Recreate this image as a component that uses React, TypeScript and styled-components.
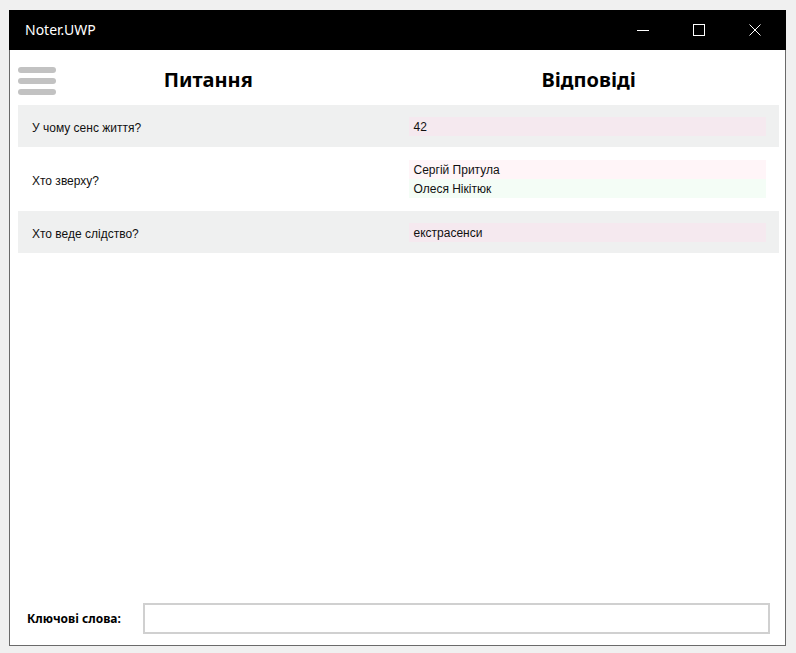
import styled, { createGlobalStyle } from "styled-components";

const GlobalStyle = createGlobalStyle`
	body {
		margin: 0;
		background: #f0f0f0;
		font-family: "Noto Sans", "Open Sans", sans-serif;
	}
`;

type Answer = { text: string; tone: "pink" | "rose" | "mint" };
type Note = { question: string; answers: Answer[] };

const notes: Note[] = [
	{ question: "У чому сенс життя?", answers: [{ text: "42", tone: "pink" }] },
	{
		question: "Хто зверху?",
		answers: [
			{ text: "Сергій Притула", tone: "rose" },
			{ text: "Олеся Нікітюк", tone: "mint" },
		],
	},
	{ question: "Хто веде слідство?", answers: [{ text: "екстрасенси", tone: "pink" }] },
];

const toneColors = {
	pink: "#f5e9ef",
	rose: "#fff5f8",
	mint: "#f4fdf6",
};

const App = () => {
	return (
		<>
			<GlobalStyle />
			<Window>
				<TitleBar>
					<Title>Noter.UWP</Title>
					<Controls>
						<ControlButton>
							<svg width="12" height="12" viewBox="0 0 12 12">
								<path d="M0 6.5h12" stroke="#fff" strokeWidth="1" />
							</svg>
						</ControlButton>
						<ControlButton>
							<svg width="12" height="12" viewBox="0 0 12 12">
								<rect x="0.5" y="0.5" width="11" height="11" fill="none" stroke="#fff" strokeWidth="1" />
							</svg>
						</ControlButton>
						<ControlButton>
							<svg width="12" height="12" viewBox="0 0 12 12">
								<path d="M0.5 0.5l11 11M11.5 0.5l-11 11" stroke="#fff" strokeWidth="1" />
							</svg>
						</ControlButton>
					</Controls>
				</TitleBar>
				<Main>
					<Header>
						<Hamburger aria-label="menu">
							<Bar />
							<Bar />
							<Bar />
						</Hamburger>
						<HeaderCell>Питання</HeaderCell>
						<HeaderCell>Відповіді</HeaderCell>
					</Header>
					<List>
						{notes.map((note, i) => (
							<Row key={note.question} $striped={i % 2 === 0} $tall={note.answers.length > 1}>
								<Question>{note.question}</Question>
								<Answers>
									{note.answers.map((a) => (
										<AnswerBox key={a.text} $tone={a.tone}>
											{a.text}
										</AnswerBox>
									))}
								</Answers>
							</Row>
						))}
					</List>
				</Main>
				<Footer>
					<Label>Ключові слова:</Label>
					<KeywordInput type="text" />
				</Footer>
			</Window>
		</>
	);
};

export default App;

const Window = styled.div`
	box-sizing: border-box;
	margin: 10px 0 0 9px;
	width: 777px;
	height: 636px;
	border: 1px solid #6a6a6a;
	border-top: none;
	background: #fff;
	display: flex;
	flex-direction: column;
`;

const TitleBar = styled.div`
	height: 40px;
	margin: 0 -1px;
	background: #000;
	display: flex;
	align-items: center;
	justify-content: space-between;
`;

const Title = styled.span`
	color: #fff;
	font-size: 14px;
	padding-left: 16px;
	padding-bottom: 2px;
`;

const Controls = styled.div`
	display: flex;
	padding-right: 3px;
`;

const ControlButton = styled.div`
	width: 56px;
	height: 40px;
	display: flex;
	align-items: center;
	justify-content: center;
`;

const Main = styled.div`
	flex: 1;
	padding: 0 6px 0 8px;
`;

const Header = styled.div`
	position: relative;
	height: 55px;
	display: grid;
	grid-template-columns: 1fr 1fr;
	align-items: center;
`;

const Hamburger = styled.div`
	position: absolute;
	left: 0;
	top: 17px;
	width: 38px;
	display: flex;
	flex-direction: column;
	gap: 5px;
`;

const Bar = styled.div`
	height: 6px;
	border-radius: 3px;
	background: #c2c2c2;
`;

const HeaderCell = styled.h2`
	margin: 0;
	text-align: center;
	font-size: 20px;
	font-weight: 700;
	color: #000;
	padding-top: 4px;
`;

const List = styled.div`
	display: flex;
	flex-direction: column;
`;

const Row = styled.div<{ $striped: boolean; $tall: boolean }>`
	display: grid;
	grid-template-columns: 1fr 1fr;
	align-items: center;
	height: ${({ $tall }) => ($tall ? "64px" : "42px")};
	background: ${({ $striped }) => ($striped ? "#eff0f0" : "#fff")};
`;

const Question = styled.div`
	padding: 3px 0 0 14px;
	font-family: "Liberation Sans", Arial, sans-serif;
	font-size: 12px;
	color: #111;
`;

const Answers = styled.div`
	display: flex;
	flex-direction: column;
	padding: 0 13px 0 10px;
`;

const AnswerBox = styled.div<{ $tone: keyof typeof toneColors }>`
	box-sizing: border-box;
	height: 19px;
	line-height: 17px;
	padding: 2px 0 0 5px;
	font-family: "Liberation Sans", Arial, sans-serif;
	font-size: 12px;
	color: #111;
	background: ${({ $tone }) => toneColors[$tone]};
`;

const Footer = styled.div`
	display: flex;
	align-items: center;
	gap: 22px;
	padding: 0 15px 11px 17px;
`;

const Label = styled.span`
	font-size: 12px;
	font-weight: 700;
	color: #000;
	white-space: nowrap;
`;

const KeywordInput = styled.input`
	flex: 1;
	box-sizing: border-box;
	height: 31px;
	border: 2px solid #d0d0d0;
	background: #fff;
	outline: none;
`;
